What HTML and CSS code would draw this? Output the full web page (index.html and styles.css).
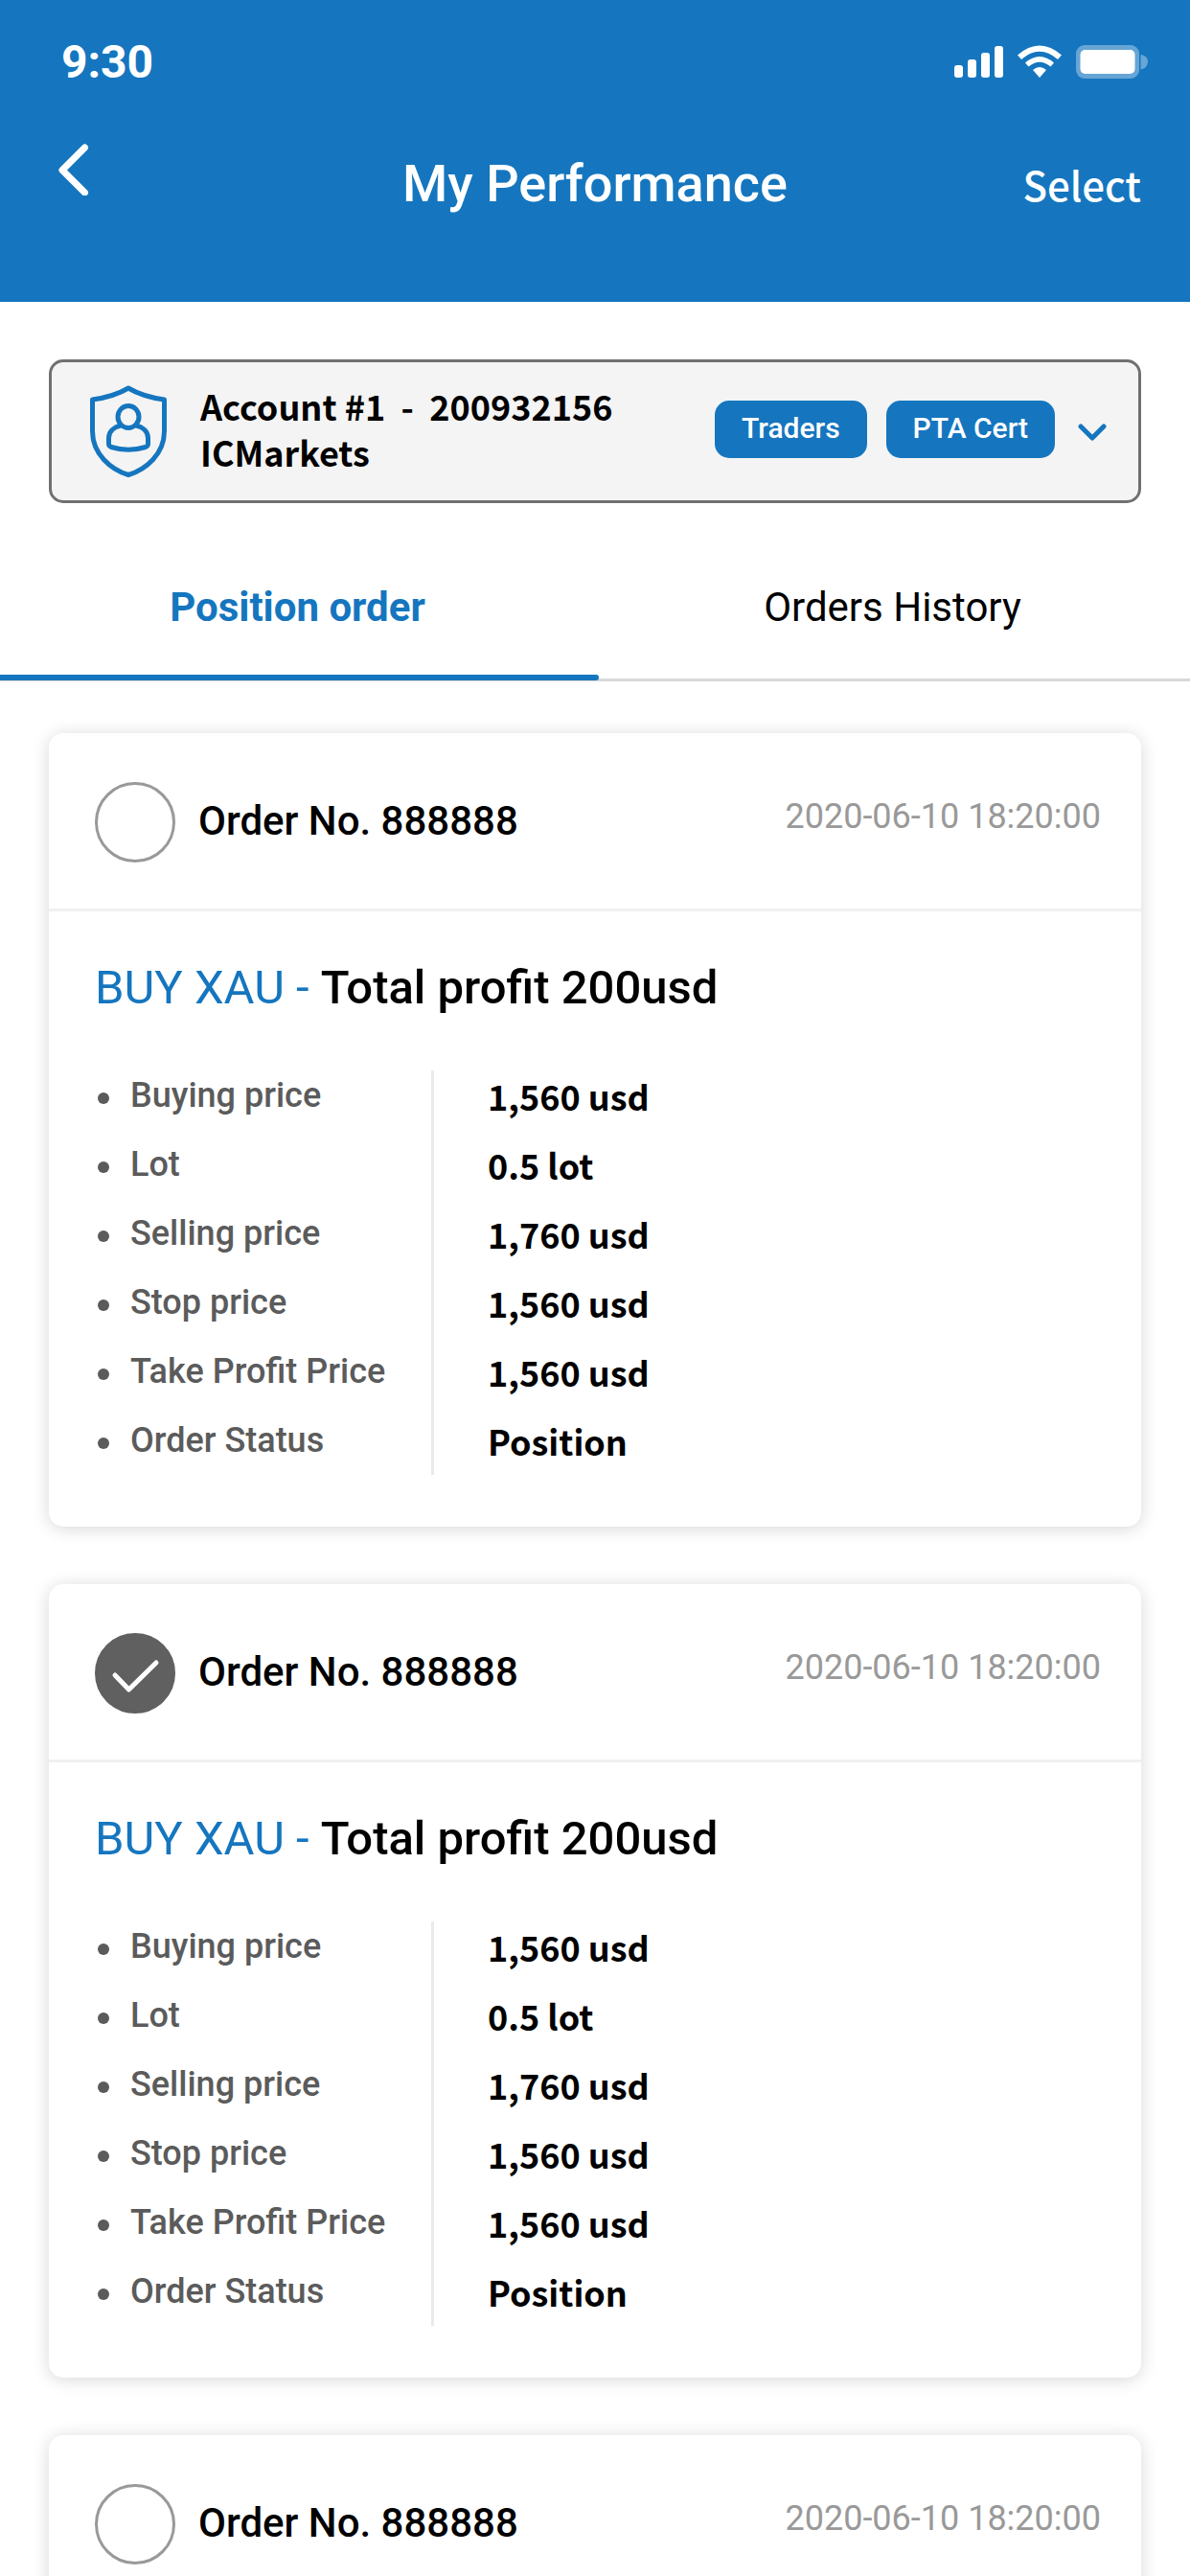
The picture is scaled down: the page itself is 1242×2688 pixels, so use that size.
FILE: index.html
```html
<!DOCTYPE html>
<html lang="en">
<head>
    <meta charset="UTF-8">
    <meta name="viewport" content="width=device-width, initial-scale=1.0">
    <title>My Performance</title>
    <link rel="stylesheet" href="styles.css">
</head>
<body>
    <header class="header">
        <div class="status-bar">
            <span class="time">9:30</span>
            <svg class="status-icons" width="202" height="36" viewBox="0 0 202 36" fill="#fff">
                <rect x="0" y="21" width="9" height="13" rx="3"/>
                <rect x="14" y="15" width="9" height="19" rx="3"/>
                <rect x="28" y="8" width="9" height="26" rx="3"/>
                <rect x="42" y="1" width="9" height="33" rx="3"/>
                <path d="M66 10.500Q89 -9.500 112 10.500L108 15Q89 -1.500 70 15Z"/>
                <path d="M74 18.500Q89 5.500 104 18.500L100.500 22.500Q89 13 77.500 22.500Z"/>
                <path d="M82 26Q89 20 96 26L89 34Z"/>
                <rect x="127" y="0" width="66" height="35" rx="9" opacity=".35"/>
                <rect x="131.500" y="5" width="57" height="25" rx="5"/>
                <path d="M194.500 10Q202 11 202 17.500Q202 24 194.500 25.500Z" opacity=".35"/>
            </svg>
        </div>
        <nav class="nav">
            <button type="button" class="back-button" aria-label="Back">
                <svg width="32" height="54" viewBox="0 0 32 54" fill="none" stroke="#fff" stroke-width="7" stroke-linecap="round" stroke-linejoin="round">
                    <path d="M27.500 4L4 27.500L27.500 51"/>
                </svg>
            </button>
            <h1 class="title">My Performance</h1>
            <button type="button" class="select-button">Select</button>
        </nav>
    </header>

    <section class="account">
        <svg class="shield" width="80" height="96" viewBox="0 0 80 96" fill="none" stroke="#1576bf" stroke-width="5" stroke-linejoin="round">
            <path d="M40 3C30 9 17 13 2.500 15V48C2.500 72 22 88 40 93.500C58 88 77.500 72 77.500 48V15C63 13 50 9 40 3Z"/>
            <ellipse cx="40" cy="33" rx="11" ry="11.500"/>
            <path d="M32 42C25 43.500 19.500 48 19.500 55V61Q19.500 63.500 22 64.500Q40 70 58 64.500Q60.500 63.500 60.500 61V55C60.500 48 55 43.500 48 42"/>
        </svg>
        <div class="account-name">Account #1&nbsp; -&nbsp; 200932156<br>ICMarkets</div>
        <div class="account-actions">
            <button type="button" class="chip">Traders</button>
            <button type="button" class="chip">PTA Cert</button>
            <button type="button" class="expand-button" aria-label="Change account">
                <svg width="30" height="20" viewBox="0 0 30 20" fill="none" stroke="#1576bf" stroke-width="5" stroke-linecap="round" stroke-linejoin="round">
                    <path d="M3 4L15 16L27 4"/>
                </svg>
            </button>
        </div>
    </section>

    <div class="tabs">
        <a href="#position" class="tab active">Position order</a>
        <a href="#history" class="tab">Orders History</a>
    </div>

    <main class="orders">
        <article class="card">
            <div class="card-header">
                <label class="order-label">
                    <span class="check">
                        <input type="checkbox">
                        <svg width="84" height="84" viewBox="0 0 84 84"><path d="M21 44L35.500 59L64 31"/></svg>
                    </span>
                    <span class="order-number">Order No. 888888</span>
                </label>
                <time class="date">2020-06-10 18:20:00</time>
            </div>
            <div class="card-body">
                <h2 class="profit"><span class="pair">BUY XAU - </span>Total profit 200usd</h2>
                <dl class="details">
                    <dt>Buying price</dt><dd>1,560 usd</dd>
                    <dt>Lot</dt><dd>0.5 lot</dd>
                    <dt>Selling price</dt><dd>1,760 usd</dd>
                    <dt>Stop price</dt><dd>1,560 usd</dd>
                    <dt>Take Profit Price</dt><dd>1,560 usd</dd>
                    <dt>Order Status</dt><dd>Position</dd>
                </dl>
            </div>
        </article>

        <article class="card">
            <div class="card-header">
                <label class="order-label">
                    <span class="check">
                        <input type="checkbox" checked>
                        <svg width="84" height="84" viewBox="0 0 84 84"><path d="M21 44L35.500 59L64 31"/></svg>
                    </span>
                    <span class="order-number">Order No. 888888</span>
                </label>
                <time class="date">2020-06-10 18:20:00</time>
            </div>
            <div class="card-body">
                <h2 class="profit"><span class="pair">BUY XAU - </span>Total profit 200usd</h2>
                <dl class="details">
                    <dt>Buying price</dt><dd>1,560 usd</dd>
                    <dt>Lot</dt><dd>0.5 lot</dd>
                    <dt>Selling price</dt><dd>1,760 usd</dd>
                    <dt>Stop price</dt><dd>1,560 usd</dd>
                    <dt>Take Profit Price</dt><dd>1,560 usd</dd>
                    <dt>Order Status</dt><dd>Position</dd>
                </dl>
            </div>
        </article>

        <article class="card">
            <div class="card-header">
                <label class="order-label">
                    <span class="check">
                        <input type="checkbox">
                        <svg width="84" height="84" viewBox="0 0 84 84"><path d="M21 44L35.500 59L64 31"/></svg>
                    </span>
                    <span class="order-number">Order No. 888888</span>
                </label>
                <time class="date">2020-06-10 18:20:00</time>
            </div>
        </article>
    </main>
</body>
</html>
```
FILE: styles.css
```css
* {
    box-sizing: border-box;
}

body {
    margin: 0;
    background-color: #fff;
    color: #000;
    font-family: Roboto, 'Liberation Sans', sans-serif;
    font-size: 36px;
}

button {
    padding: 0;
    border: none;
    background: none;
    font-family: inherit;
    cursor: pointer;
}

svg {
    display: block;
}

/* Header */
.header {
    background-color: #1576bf;
    color: #fff;
    padding-bottom: 81px;
}

.status-bar {
    display: flex;
    justify-content: space-between;
    align-items: center;
    padding: 36px 44px 0 64px;
}

.time {
    font-size: 48px;
    font-weight: 700;
    line-height: 57px;
}

.nav {
    display: grid;
    grid-template-columns: 1fr auto 1fr;
    align-items: baseline;
    padding: 57px 51px 0;
}

.back-button {
    justify-self: start;
    align-self: start;
    margin-left: 10px;
}

.title {
    margin: 0;
    font-size: 54px;
    font-weight: 500;
    line-height: 84px;
}

.select-button {
    justify-self: end;
    color: #fff;
    font-family: 'Noto Sans CJK JP', sans-serif;
    font-size: 42px;
    font-weight: 500;
    line-height: 60px;
}

/* Account picker */
.account {
    display: flex;
    align-items: center;
    margin: 60px 51px 0;
    padding: 21px 33px 21px 40px;
    border: 3px solid #707070;
    border-radius: 15px;
    background-color: #f4f4f4;
}

.account-name {
    flex: 1;
    margin-left: 35px;
    padding-bottom: 6px;
    font-family: 'Noto Sans CJK JP', sans-serif;
    font-weight: 700;
    line-height: 48px;
}

.account-actions {
    display: flex;
    align-items: center;
    gap: 20px;
    padding-bottom: 4px;
}

.chip {
    padding: 0 28px 2px;
    border-radius: 15px;
    background-color: #1576bf;
    color: #fff;
    font-size: 30px;
    font-weight: 500;
    line-height: 58px;
}

.expand-button {
    margin: 6px 0 0 4px;
}

/* Tabs */
.tabs {
    display: flex;
    margin-top: 60px;
    border-bottom: 3px solid #d8d8d8;
}

.tab {
    position: relative;
    flex: 1;
    padding: 19px 0 44px;
    color: #000;
    font-size: 42px;
    line-height: 60px;
    text-align: center;
    text-decoration: none;
}

.tab.active {
    color: #1576bf;
    font-weight: 700;
}

.tab.active::after {
    content: "";
    position: absolute;
    left: 0;
    right: -4px;
    bottom: -2px;
    height: 6px;
    border-radius: 0 3px 3px 0;
    background-color: #1576bf;
}

/* Orders */
.orders {
    display: flex;
    flex-direction: column;
    gap: 60px;
    padding: 54px 51px;
}

.card {
    border-radius: 15px;
    background-color: #fff;
    box-shadow: 0 2px 18px rgba(0, 0, 0, 0.16);
}

.card-header {
    display: flex;
    justify-content: space-between;
    align-items: center;
    padding: 51px 42px 48px 48px;
    border-bottom: 3px solid #f0f0f0;
}

.order-label {
    display: flex;
    align-items: center;
    gap: 24px;
}

.order-number {
    padding-bottom: 4px;
    font-size: 42px;
    font-weight: 500;
}

.check {
    display: grid;
}

.check input {
    grid-area: 1 / 1;
    appearance: none;
    width: 84px;
    height: 84px;
    margin: 0;
    border: 3px solid #999;
    border-radius: 50%;
}

.check svg {
    grid-area: 1 / 1;
    visibility: hidden;
    fill: none;
    stroke: #fff;
    stroke-width: 5;
    stroke-linecap: round;
    stroke-linejoin: round;
}

.check input:checked {
    border-color: #606060;
    background-color: #606060;
}

.check input:checked + svg {
    visibility: visible;
}

.date {
    color: #999;
    line-height: 42px;
    padding-bottom: 12px;
}

.card-body {
    padding: 47px 48px 54px;
}

.profit {
    margin: 0;
    font-size: 49px;
    font-weight: 500;
    line-height: 66px;
}

.pair {
    color: #1576bf;
    font-weight: 400;
}

.details {
    display: grid;
    grid-template-columns: 351px 3px 1fr;
    margin: 43px 0 0;
    line-height: 72px;
}

/* rule between the names and the values */
.details::before {
    content: "";
    grid-column: 2;
    grid-row: 1 / span 6;
    margin-top: 10px;
    background-color: #eaeaea;
}

.details dt {
    grid-column: 1;
    display: flex;
    align-items: center;
    gap: 22px;
    padding-left: 3px;
    color: #5b5b5b;
    font-weight: 500;
}

.details dt::before {
    content: "";
    width: 12px;
    height: 12px;
    margin-top: 6px;
    border-radius: 50%;
    background-color: #5b5b5b;
}

.details dd {
    grid-column: 3;
    margin: 0 0 0 56px;
    font-family: 'Noto Sans CJK JP', sans-serif;
    font-weight: 700;
}
```
